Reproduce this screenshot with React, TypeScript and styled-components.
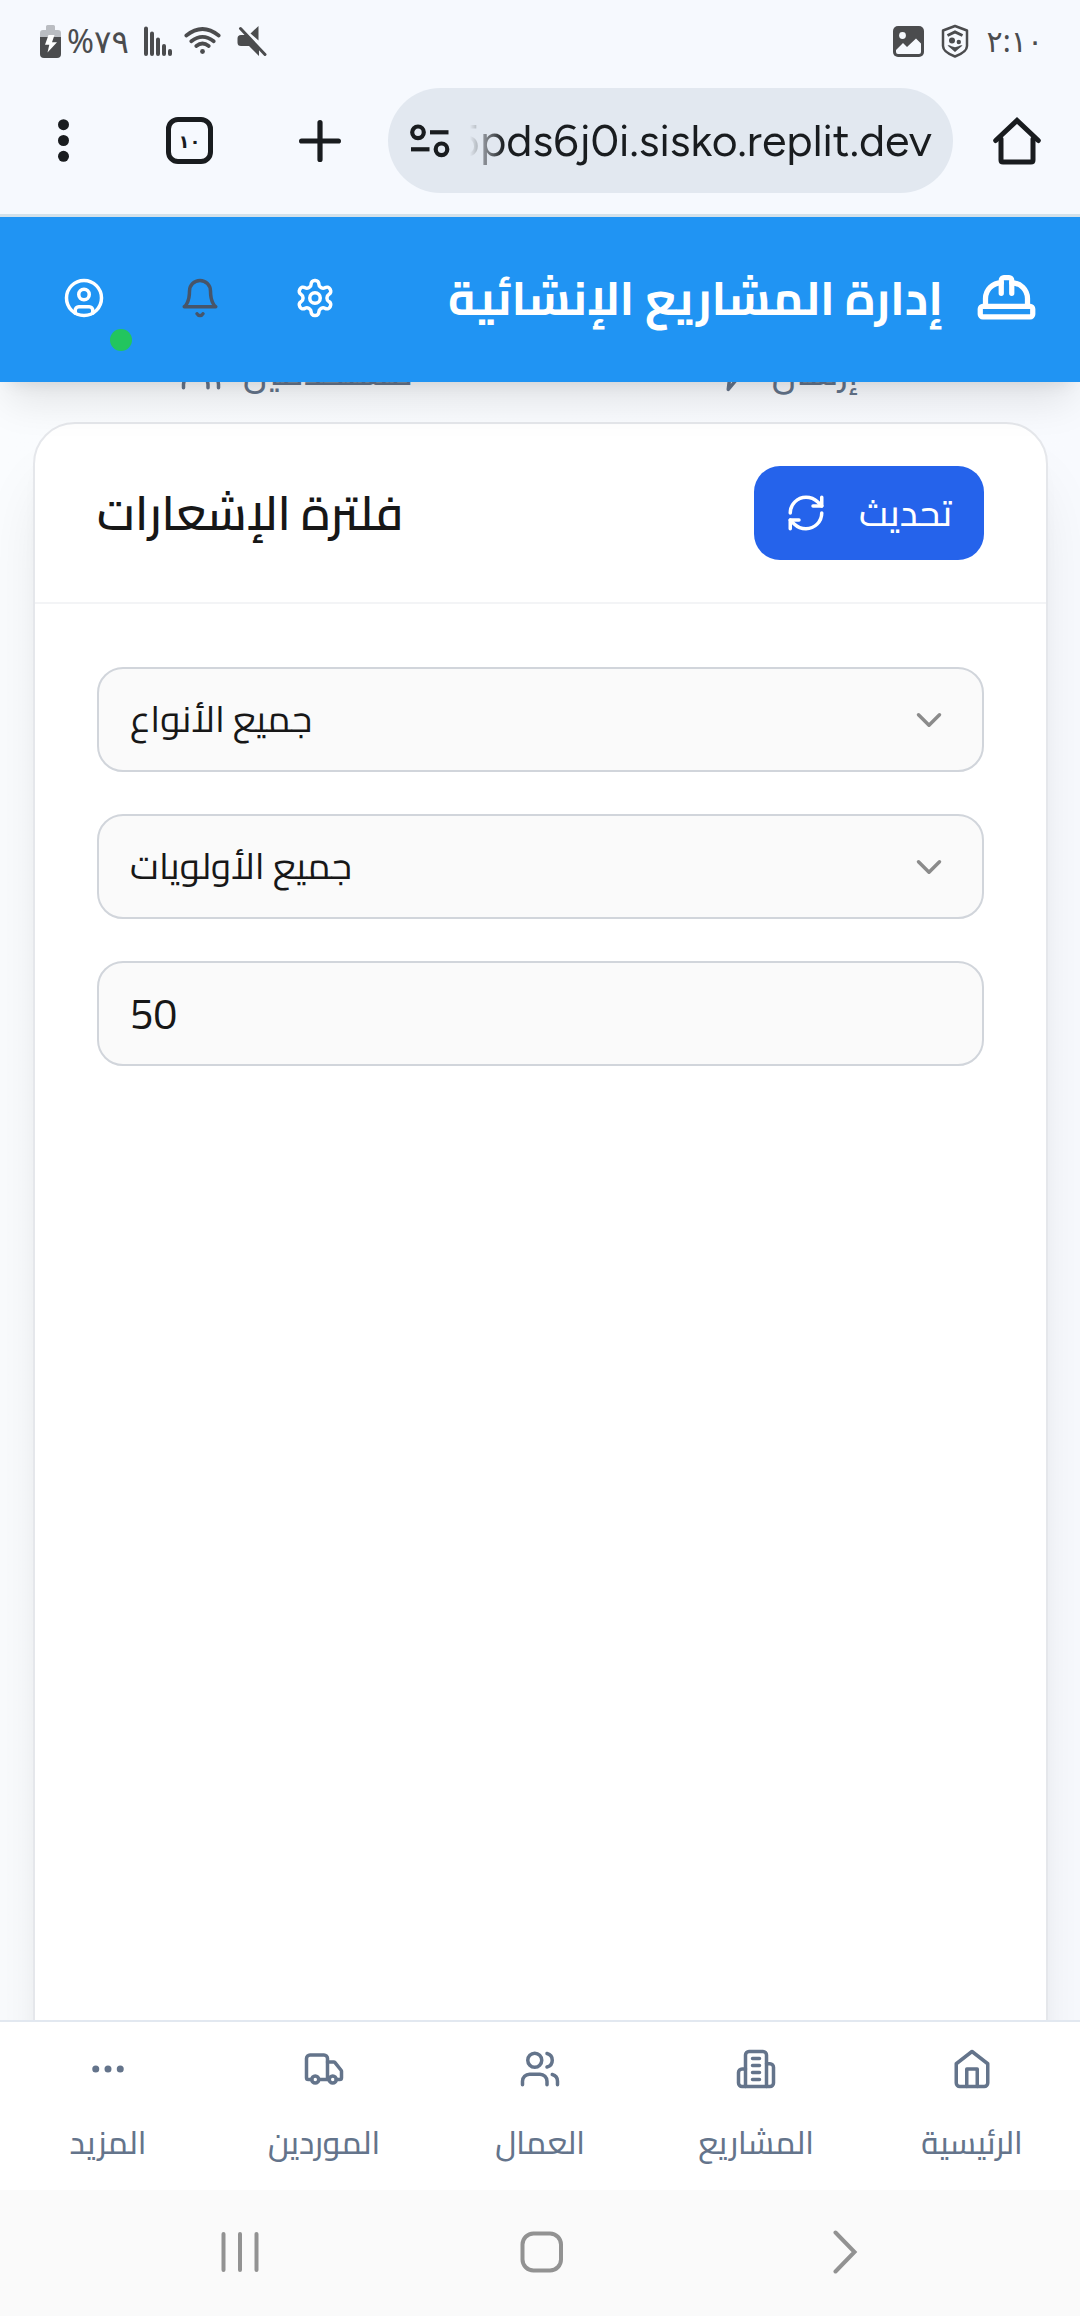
import React from 'react';
import styled, { createGlobalStyle } from 'styled-components';

const arabic = 'Cairo, "Noto Sans Arabic", "DejaVu Sans", sans-serif';

const GlobalStyle = createGlobalStyle`
  * { box-sizing: border-box; }
  body { margin: 0; background: #fff; font-family: ${arabic}; color: #171717; }
`;

const Screen = styled.div`
  display: flex;
  flex-direction: column;
  width: 1080px;
  height: 2316px;
  overflow: hidden;
`;

const BrowserChrome = styled.div`
  display: flex;
  flex-direction: column;
  flex: none;
  height: 217px;
  background: #f6f9fe;
  border-bottom: 3px solid #d3e1ea;
  position: relative;
  z-index: 3;
`;

const StatusBar = styled.div`
  display: flex;
  align-items: center;
  justify-content: space-between;
  height: 82px;
  padding: 0 37px 0 39px;
  color: #4b4c4e;
`;

const StatusGroup = styled.div`
  display: flex;
  align-items: center;
`;

const StatusText = styled.span<{ $gap: number; $size: number; $tracking?: number }>`
  font-family: "Noto Sans", "DejaVu Sans", sans-serif;
  font-size: ${p => p.$size}px;
  letter-spacing: ${p => p.$tracking || 0}px;
  line-height: 40px;
  margin-left: ${p => p.$gap}px;
  white-space: nowrap;
`;

const Spaced = styled.div<{ $gap: number }>`
  display: flex;
  flex: none;
  margin-left: ${p => p.$gap}px;
`;

const Toolbar = styled.div`
  display: flex;
  align-items: center;
  height: 117px;
  padding-left: 58px;
  color: #191c1f;
`;

const TabCount = styled.div`
  display: flex;
  align-items: center;
  justify-content: center;
  width: 47px;
  height: 47px;
  margin-left: 97px;
  border: 5px solid #191c1f;
  border-radius: 12px;
  font: 700 18px/30px "Noto Sans", "DejaVu Sans", sans-serif;
  letter-spacing: -1px;
`;

const AddressPill = styled.div`
  display: flex;
  align-items: center;
  width: 565px;
  height: 105px;
  margin-left: 47px;
  padding: 0 21px 0 22px;
  border-radius: 53px;
  background: #e2e8f0;
`;

const Url = styled.div`
  display: flex;
  justify-content: flex-end;
  flex: 1;
  font-family: "Google Sans", "Product Sans", Figtree, Lato, sans-serif;
  font-size: 44.6px;
  line-height: 62px;
  white-space: nowrap;
  mask-image: linear-gradient(90deg, transparent 20px, rgba(0, 0, 0, 0.4) 33px, #000 54px);
`;

const AppHeader = styled.header`
  display: flex;
  align-items: center;
  justify-content: space-between;
  flex: none;
  height: 165px;
  padding: 0 42px 3px 31.5px;
  background: #2094f3;
  color: #fff;
  box-shadow: 0 26px 39px -8px rgba(0, 0, 0, 0.1), 0 10px 16px -10px rgba(0, 0, 0, 0.1);
  position: relative;
  z-index: 2;
`;

const HeaderActions = styled.div`
  display: flex;
  gap: 10.5px;
`;

const IconButton = styled.button<{ $color?: string }>`
  position: relative;
  display: flex;
  align-items: center;
  justify-content: center;
  width: 105px;
  height: 105px;
  padding: 0;
  border: 0;
  background: none;
  color: ${p => p.$color || '#fff'};
`;

const OnlineDot = styled.span`
  position: absolute;
  right: 5px;
  bottom: 0;
  width: 22px;
  height: 22px;
  border-radius: 50%;
  background: #22c55e;
`;

const Brand = styled.div`
  display: flex;
  align-items: center;
  gap: 32px;
`;

const BrandTitle = styled.h1`
  margin: 0;
  font-size: 47.25px;
  font-weight: 700;
  line-height: 74px;
  white-space: nowrap;
`;

const Main = styled.main`
  display: flex;
  flex-direction: column;
  flex: 1;
  min-height: 0;
  margin-top: -61px;
  padding: 0 32px 0 33px;
  background: linear-gradient(90deg, #fafcfe, #f8fafe);
  overflow: hidden;
`;

const TabRow = styled.div`
  display: grid;
  grid-template-columns: 1fr 1fr;
  flex: none;
  height: 101px;
  padding: 0 21px 0 20px;
`;

const Tab = styled.div`
  display: flex;
  align-items: center;
  justify-content: center;
  gap: 21px;
  color: #64748b;
  font-size: 36.75px;
  font-weight: 500;
  line-height: 52px;
`;

const Card = styled.section`
  flex: none;
  width: 1015px;
  height: 1800px;
  border: 2px solid #e5e7eb;
  border-radius: 42px;
  background: #fff;
  box-shadow: 0 52px 66px -13px rgba(0, 0, 0, 0.1), 0 21px 26px -16px rgba(0, 0, 0, 0.1);
`;

const CardHeader = styled.div`
  display: flex;
  align-items: center;
  justify-content: space-between;
  height: 180px;
  padding: 0 62px;
  border-bottom: 2px solid #f3f4f6;
`;

const CardTitle = styled.h2`
  margin: 0;
  font-size: 47.25px;
  font-weight: 600;
  line-height: 74px;
`;

const RefreshButton = styled.button`
  display: flex;
  align-items: center;
  justify-content: space-between;
  width: 230px;
  height: 94px;
  padding: 0 32px 0 31px;
  border: 0;
  border-radius: 26px;
  background: #2563eb;
  color: #fff;
  font: 500 36.75px/52px ${arabic};
`;

const Filters = styled.div`
  display: flex;
  flex-direction: column;
  gap: 42px;
  padding: 63px 62px 0;
`;

const Field = styled.div<{ $size: number }>`
  display: flex;
  align-items: center;
  justify-content: space-between;
  height: 105px;
  padding: 0 32px 0 31px;
  border: 2px solid #d1d5db;
  border-radius: 26px;
  background: #fafafa;
  font-size: ${p => p.$size}px;
  line-height: 54px;
`;

const SelectValue = styled.span`
  padding-bottom: 2px;
`;

const BottomNav = styled.nav`
  display: grid;
  grid-template-columns: repeat(5, 1fr);
  flex: none;
  height: 170px;
  padding-top: 26px;
  border-top: 2px solid #e2e8f0;
  background: #fff;
  position: relative;
  z-index: 1;
`;

const NavItem = styled.a`
  display: flex;
  flex-direction: column;
  align-items: center;
  gap: 32px;
  color: #64748b;
  font-size: 31.5px;
  font-weight: 500;
  line-height: 42px;
`;

const SystemBar = styled.div`
  display: flex;
  align-items: center;
  flex: none;
  height: 126px;
  padding: 0 0 2px 219px;
  background: #fafafa;
`;

type IconProps = { size?: number; color?: string; children: React.ReactNode };
const LineIcon = ({ size = 42, color = 'currentColor', children }: IconProps) => (
  <svg width={size} height={size} viewBox="0 0 24 24" fill="none" stroke={color} strokeWidth="2"
    strokeLinecap="round" strokeLinejoin="round">{children}</svg>
);

const UserCircle = () => <LineIcon><circle cx="12" cy="12" r="10" /><circle cx="12" cy="10" r="3" />
  <path d="M7 20.662V19a2 2 0 0 1 2-2h6a2 2 0 0 1 2 2v1.662" /></LineIcon>;
const Bell = () => <LineIcon><path d="M6 8a6 6 0 0 1 12 0c0 7 3 9 3 9H3s3-2 3-9" /><path d="M10.3 21a1.94 1.94 0 0 0 3.4 0" /></LineIcon>;
const Gear = () => <LineIcon>
  <path d="M12.22 2h-.44a2 2 0 0 0-2 2v.18a2 2 0 0 1-1 1.73l-.43.25a2 2 0 0 1-2 0l-.15-.08a2 2 0 0 0-2.73.73l-.22.38a2 2 0 0 0 .73 2.73l.15.1a2 2 0 0 1 1 1.72v.51a2 2 0 0 1-1 1.74l-.15.09a2 2 0 0 0-.73 2.73l.22.38a2 2 0 0 0 2.73.73l.15-.08a2 2 0 0 1 2 0l.43.25a2 2 0 0 1 1 1.73V20a2 2 0 0 0 2 2h.44a2 2 0 0 0 2-2v-.18a2 2 0 0 1 1-1.73l.43-.25a2 2 0 0 1 2 0l.15.08a2 2 0 0 0 2.73-.73l.22-.39a2 2 0 0 0-.73-2.73l-.15-.08a2 2 0 0 1-1-1.74v-.5a2 2 0 0 1 1-1.74l.15-.09a2 2 0 0 0 .73-2.73l-.22-.38a2 2 0 0 0-2.73-.73l-.15.08a2 2 0 0 1-2 0l-.43-.25a2 2 0 0 1-1-1.73V4a2 2 0 0 0-2-2z" />
  <circle cx="12" cy="12" r="3" /></LineIcon>;
const HardHat = () => <LineIcon size={63}>
  <rect x="2" y="15" width="20" height="4" rx="1" />
  <path d="M10 10V5a1 1 0 0 1 1-1h2a1 1 0 0 1 1 1v5" /><path d="M4 15v-3a6 6 0 0 1 6-6" /><path d="M14 6a6 6 0 0 1 6 6v3" /></LineIcon>;
const Users = () => <LineIcon><path d="M16 21v-2a4 4 0 0 0-4-4H6a4 4 0 0 0-4 4v2" /><circle cx="9" cy="7" r="4" />
  <path d="M22 21v-2a4 4 0 0 0-3-3.87" /><path d="M16 3.13a4 4 0 0 1 0 7.75" /></LineIcon>;
const Zap = () => <LineIcon><path d="M13 2 3 14h9l-1 8 10-12h-9l1-8z" /></LineIcon>;
const Refresh = () => <LineIcon><path d="M3 12a9 9 0 0 1 9-9 9.75 9.75 0 0 1 6.74 2.74L21 8" /><path d="M21 3v5h-5" />
  <path d="M21 12a9 9 0 0 1-9 9 9.75 9.75 0 0 1-6.74-2.74L3 16" /><path d="M8 16H3v5" /></LineIcon>;
const ChevronDown = () => <LineIcon color="#8b8b8b"><path d="m6 9 6 6 6-6" /></LineIcon>;
const House = () => <LineIcon><path d="m3 9 9-7 9 7v11a2 2 0 0 1-2 2H5a2 2 0 0 1-2-2z" /><path d="M9 22V12h6v10" /></LineIcon>;
const Building = () => <LineIcon><path d="M6 22V4a2 2 0 0 1 2-2h8a2 2 0 0 1 2 2v18Z" /><path d="M6 12H4a2 2 0 0 0-2 2v6a2 2 0 0 0 2 2h2" />
  <path d="M18 9h2a2 2 0 0 1 2 2v9a2 2 0 0 1-2 2h-2" /><path d="M10 6h4M10 10h4M10 14h4M10 18h4" /></LineIcon>;
const Truck = () => <LineIcon><path d="M14 18V6a2 2 0 0 0-2-2H4a2 2 0 0 0-2 2v11a1 1 0 0 0 1 1h2" /><path d="M15 18H9" />
  <path d="M19 18h2a1 1 0 0 0 1-1v-3.65a1 1 0 0 0-.22-.624l-3.48-4.35A1 1 0 0 0 17.52 8H14" />
  <circle cx="17" cy="18" r="2" /><circle cx="7" cy="18" r="2" /></LineIcon>;
const More = () => <LineIcon><circle cx="12" cy="12" r="1" /><circle cx="19" cy="12" r="1" /><circle cx="5" cy="12" r="1" /></LineIcon>;

const Battery = () => (
  <svg width="24" height="36" viewBox="0 0 24 36">
    <path d="M7 3.5Q7 2 8.500 2h6q1.500 0 1.500 1.500V7h3q3 0 3 3v4H1v-4q0-3 3-3h3z" fill="#babdc2" />
    <path d="M1 14h21v17q0 4-4 4H5q-4 0-4-4z" fill="#4b4c4e" />
    <path d="M9.500 12h6l-2.500 7.200h5L8.500 29.500l1.800-7.700H6z" fill="#fff" />
  </svg>
);
const Signal = () => (
  <svg width="28" height="31" viewBox="0 0 28 31" stroke="currentColor" strokeWidth="4" strokeLinecap="round">
    <path d="M2 2.500V28M8 7.500V28M14 13.500V28M20 20V28M26 25V28" />
  </svg>
);
const Wifi = () => (
  <svg width="37" height="28" viewBox="0 0 37 28" fill="none" stroke="currentColor" strokeWidth="3.700" strokeLinecap="round">
    <path d="M2.300 8.500Q18.500-4.500 34.700 8.500M7.300 14.300Q18.500 5.300 29.700 14.300M12.300 19Q18.500 14 24.700 19" />
    <circle cx="18.500" cy="24.500" r="2.400" fill="currentColor" stroke="none" />
  </svg>
);
const Muted = () => (
  <svg width="30" height="32" viewBox="0 0 30 32">
    <path d="M4 10h6L22 22v9L12 21H4q-3.500 0-3.500-3.500v-4Q.5 10 4 10zM13.500 8.500L21.500 1v14.500z" fill="currentColor" />
    <path d="M3.500 3.500L28 29.500" stroke="currentColor" strokeWidth="3" strokeLinecap="round" />
  </svg>
);
const Gallery = () => (
  <svg width="31" height="31" viewBox="0 0 31 31">
    <rect width="31" height="31" rx="5" fill="currentColor" />
    <circle cx="9.500" cy="9.500" r="3.400" fill="#f6f9fe" />
    <path d="M3 24l7-7 4 4 9-8.500 5 5V26q0 2-2 2H5q-2 0-2-2z" fill="#f6f9fe" />
  </svg>
);
const Shield = () => (
  <svg width="28" height="34" viewBox="0 0 28 34" fill="none" stroke="currentColor" strokeWidth="2.500">
    <path d="M14 2l12 4.500V22q0 6-12 10.500Q2 28 2 22V6.500z" strokeLinejoin="round" />
    <path d="M6.500 11.500L14 8l7.500 3.500" strokeWidth="3" />
    <g fill="currentColor" stroke="none">
      <circle cx="11" cy="16.500" r="3" /><circle cx="17.800" cy="18" r="2.200" />
      <path d="M6.500 21.500q2-.5 4 .8l3.500 1 3.500-1q2-1.300 4-.8L14 28z" />
    </g>
  </svg>
);
const MenuDots = () => (
  <svg width="11" height="43" viewBox="0 0 11 43" fill="currentColor">
    <circle cx="5.500" cy="5.700" r="5.500" /><circle cx="5.500" cy="21.500" r="5.500" /><circle cx="5.500" cy="37.300" r="5.500" />
  </svg>
);
const Plus = () => (
  <svg width="42" height="42" viewBox="0 0 42 42" stroke="currentColor" strokeWidth="5.200" strokeLinecap="round">
    <path d="M21 2.600v36.800M2.600 21h36.800" />
  </svg>
);
const SiteControls = () => (
  <svg width="40" height="34" viewBox="0 0 40 34" fill="none" stroke="currentColor" strokeWidth="4.200">
    <circle cx="8" cy="8.300" r="5.800" /><path d="M20 8.300h18.500" /><circle cx="31.500" cy="25.300" r="5.800" /><path d="M1 25.300h18.500" />
  </svg>
);
const BrowserHome = () => (
  <svg width="48" height="48" viewBox="0 0 48 48" fill="none" stroke="currentColor" strokeWidth="5" strokeLinecap="round">
    <path d="M8 22v21q0 2 2 2h28q2 0 2-2V22" /><path d="M2.700 23.500L24 3.500l21.300 20" strokeLinejoin="miter" />
  </svg>
);
const Recents = () => (
  <svg width="41" height="42" viewBox="0 0 41 42" stroke="#929292" strokeWidth="4" strokeLinecap="round">
    <path d="M4.500 3v36M21 3v36M37.500 3v36" />
  </svg>
);
const HomeKey = () => (
  <svg width="44" height="42" viewBox="0 0 44 42" fill="none" stroke="#929292" strokeWidth="4">
    <rect x="2.500" y="2.500" width="38.500" height="37" rx="11" />
  </svg>
);
const BackKey = () => (
  <svg width="25" height="44" viewBox="0 0 25 44" fill="none" stroke="#929292" strokeWidth="4" strokeLinecap="round">
    <path d="M2.500 2.500L21.500 22 2.500 41.500" />
  </svg>
);

const navItems = [
  { label: 'المزيد', icon: <More /> },
  { label: 'الموردين', icon: <Truck /> },
  { label: 'العمال', icon: <Users /> },
  { label: 'المشاريع', icon: <Building /> },
  { label: 'الرئيسية', icon: <House /> },
];

export default function App() {
  return (
    <>
      <GlobalStyle />
      <Screen>
        <BrowserChrome>
          <StatusBar>
            <StatusGroup>
              <Battery />
              <StatusText $gap={4} $size={32.5}>%٧٩</StatusText>
              <Spaced $gap={15}><Signal /></Spaced>
              <Spaced $gap={12}><Wifi /></Spaced>
              <Spaced $gap={16}><Muted /></Spaced>
            </StatusGroup>
            <StatusGroup>
              <Gallery />
              <Spaced $gap={17}><Shield /></Spaced>
              <StatusText $gap={18} $size={30} $tracking={-4}>٢:١٠</StatusText>
            </StatusGroup>
          </StatusBar>
          <Toolbar>
            <MenuDots />
            <TabCount>١٠</TabCount>
            <Spaced $gap={86}><Plus /></Spaced>
            <AddressPill>
              <SiteControls />
              <Url>5pds6j0i.sisko.replit.dev</Url>
            </AddressPill>
            <Spaced $gap={40}><BrowserHome /></Spaced>
          </Toolbar>
        </BrowserChrome>

        <AppHeader>
          <HeaderActions>
            <IconButton><UserCircle /><OnlineDot /></IconButton>
            <IconButton $color="#475569"><Bell /></IconButton>
            <IconButton><Gear /></IconButton>
          </HeaderActions>
          <Brand>
            <BrandTitle dir="rtl">إدارة المشاريع الإنشائية</BrandTitle>
            <HardHat />
          </Brand>
        </AppHeader>

        <Main>
          <TabRow>
            <Tab><Users /><span>مستخدمين</span></Tab>
            <Tab><Zap /><span>إرسال</span></Tab>
          </TabRow>
          <Card>
            <CardHeader>
              <CardTitle dir="rtl">فلترة الإشعارات</CardTitle>
              <RefreshButton><Refresh /><span>تحديث</span></RefreshButton>
            </CardHeader>
            <Filters>
              <Field $size={36.75}><SelectValue dir="rtl">جميع الأنواع</SelectValue><ChevronDown /></Field>
              <Field $size={36.75}><SelectValue dir="rtl">جميع الأولويات</SelectValue><ChevronDown /></Field>
              <Field $size={42}>50</Field>
            </Filters>
          </Card>
        </Main>

        <BottomNav>
          {navItems.map(item => <NavItem key={item.label}>{item.icon}<span>{item.label}</span></NavItem>)}
        </BottomNav>
        <SystemBar>
          <Recents />
          <Spaced $gap={260}><HomeKey /></Spaced>
          <Spaced $gap={269}><BackKey /></Spaced>
        </SystemBar>
      </Screen>
    </>
  );
}
